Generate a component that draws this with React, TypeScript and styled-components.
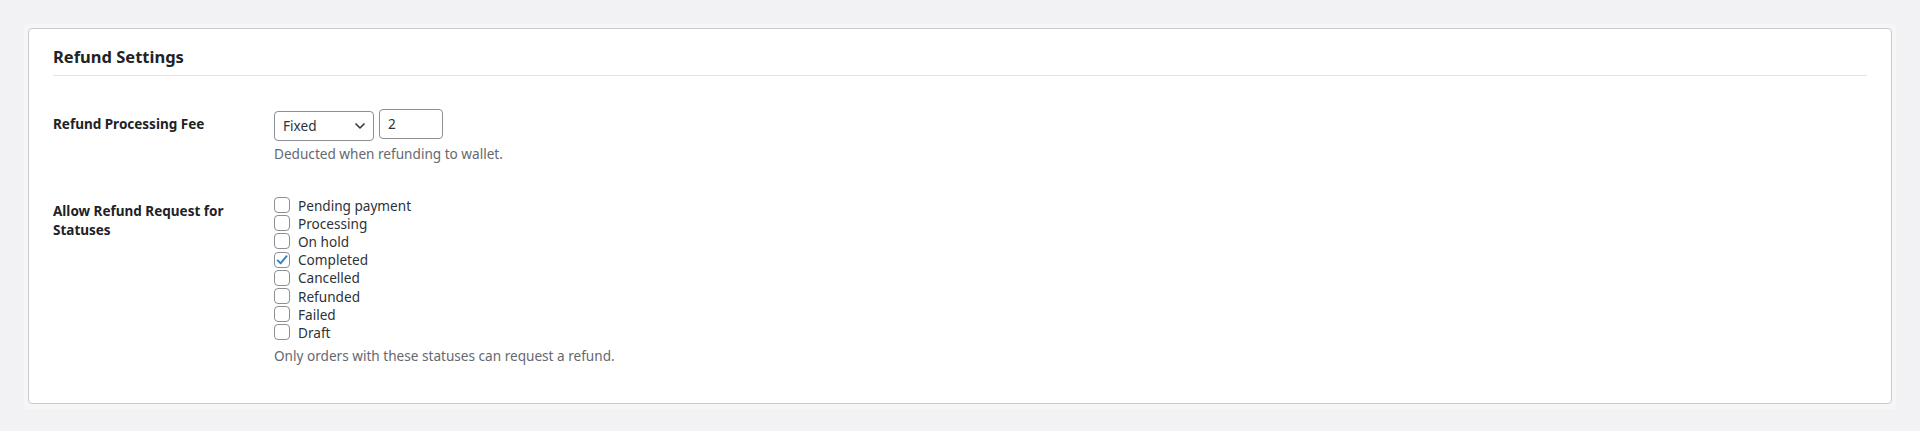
import React, { useState } from "react";
import styled, { createGlobalStyle } from "styled-components";

const GlobalStyle = createGlobalStyle`
  html, body {
    margin: 0;
    padding: 0;
    background: #f2f2f4;
  }
  body {
    font-family: "Noto Sans", "Open Sans", sans-serif;
    color: #1d2327;
  }
`;

const Page = styled.div`
  padding: 24px;
`;

const Frame = styled.div`
  background: #f6f6f7;
  padding: 4px 4px 5px;
`;

const Card = styled.section`
  background: #fff;
  border: 1px solid #c9cacd;
  border-radius: 4px;
  padding: 16px 24px 38px;
`;

const Heading = styled.h2`
  margin: 0;
  font-size: 16.5px;
  line-height: 24px;
  font-weight: 700;
  color: #1d2327;
  padding-bottom: 6px;
  border-bottom: 1px solid #e2e3e5;
`;

const Row = styled.div<{ $top: number }>`
  display: flex;
  margin-top: ${(p) => p.$top}px;
`;

const Label = styled.div<{ $offset: number }>`
  width: 200px;
  padding-right: 21px;
  padding-top: ${(p) => p.$offset}px;
  font-size: 13.5px;
  line-height: 19px;
  font-weight: 700;
  color: #1d2327;
`;

const Field = styled.div`
  display: flex;
  flex-direction: column;
`;

const Controls = styled.div`
  display: flex;
  align-items: flex-start;
  gap: 5px;
`;

const SelectBox = styled.div`
  position: relative;
  width: 100px;
  height: 30px;
  margin-top: 2px;
  box-sizing: border-box;
  border: 1px solid #8c8f94;
  border-radius: 4px;
  display: flex;
  align-items: center;
  padding-left: 8px;
  padding-bottom: 1px;
  font-size: 13.6px;
  color: #2c3338;
  background: #fff;

  svg {
    position: absolute;
    right: 7px;
    top: 10px;
  }
`;

const NumberInput = styled.input`
  width: 64px;
  height: 30px;
  box-sizing: border-box;
  border: 1px solid #8c8f94;
  border-radius: 4px;
  padding: 0 8px 2px;
  font-family: inherit;
  font-size: 13.6px;
  color: #2c3338;
  outline: none;
`;

const Description = styled.p<{ $top: number }>`
  margin: ${(p) => p.$top}px 0 0;
  font-size: 13.6px;
  line-height: 18px;
  color: #646970;
`;

const CheckList = styled.div`
  display: flex;
  flex-direction: column;
`;

const CheckRow = styled.label`
  display: flex;
  align-items: center;
  height: 18.2px;
  gap: 8px;
  font-size: 13.6px;
  color: #2c3338;
  cursor: pointer;
`;

const Box = styled.span`
  width: 16px;
  height: 16px;
  box-sizing: border-box;
  border: 1px solid #8c8f94;
  border-radius: 4px;
  background: #fff;
  display: flex;
  align-items: center;
  justify-content: center;
  flex-shrink: 0;
`;

const statuses = [
  "Pending payment",
  "Processing",
  "On hold",
  "Completed",
  "Cancelled",
  "Refunded",
  "Failed",
  "Draft",
];

function Check({ label, checked, onToggle }: { label: string; checked: boolean; onToggle: () => void }) {
  return (
    <CheckRow onClick={onToggle}>
      <Box>
        {checked && (
          <svg width="14" height="14" viewBox="0 0 14 14">
            <path d="M2.6 7.4 L5.6 10.3 L11.6 3.2" fill="none" stroke="#3582c4" strokeWidth="1.9" strokeLinecap="round" strokeLinejoin="round" />
          </svg>
        )}
      </Box>
      {label}
    </CheckRow>
  );
}

export default function App() {
  const [checked, setChecked] = useState<string[]>(["Completed"]);
  const toggle = (s: string) =>
    setChecked((c) => (c.includes(s) ? c.filter((x) => x !== s) : [...c, s]));

  return (
    <>
      <GlobalStyle />
      <Page>
        <Frame>
          <Card>
            <Heading>Refund Settings</Heading>

            <Row $top={33}>
              <Label $offset={6}>Refund Processing Fee</Label>
              <Field>
                <Controls>
                  <SelectBox>
                    Fixed
                    <svg width="12" height="8" viewBox="0 0 12 8">
                      <path d="M1.5 1.5 L6 6 L10.5 1.5" fill="none" stroke="#2c3338" strokeWidth="1.5" />
                    </svg>
                  </SelectBox>
                  <NumberInput defaultValue="2" />
                </Controls>
                <Description $top={4}>Deducted when refunding to wallet.</Description>
              </Field>
            </Row>

            <Row $top={33}>
              <Label $offset={6}>Allow Refund Request for Statuses</Label>
              <Field>
                <CheckList>
                  {statuses.map((s) => (
                    <Check key={s} label={s} checked={checked.includes(s)} onToggle={() => toggle(s)} />
                  ))}
                </CheckList>
                <Description $top={5}>Only orders with these statuses can request a refund.</Description>
              </Field>
            </Row>
          </Card>
        </Frame>
      </Page>
    </>
  );
}
